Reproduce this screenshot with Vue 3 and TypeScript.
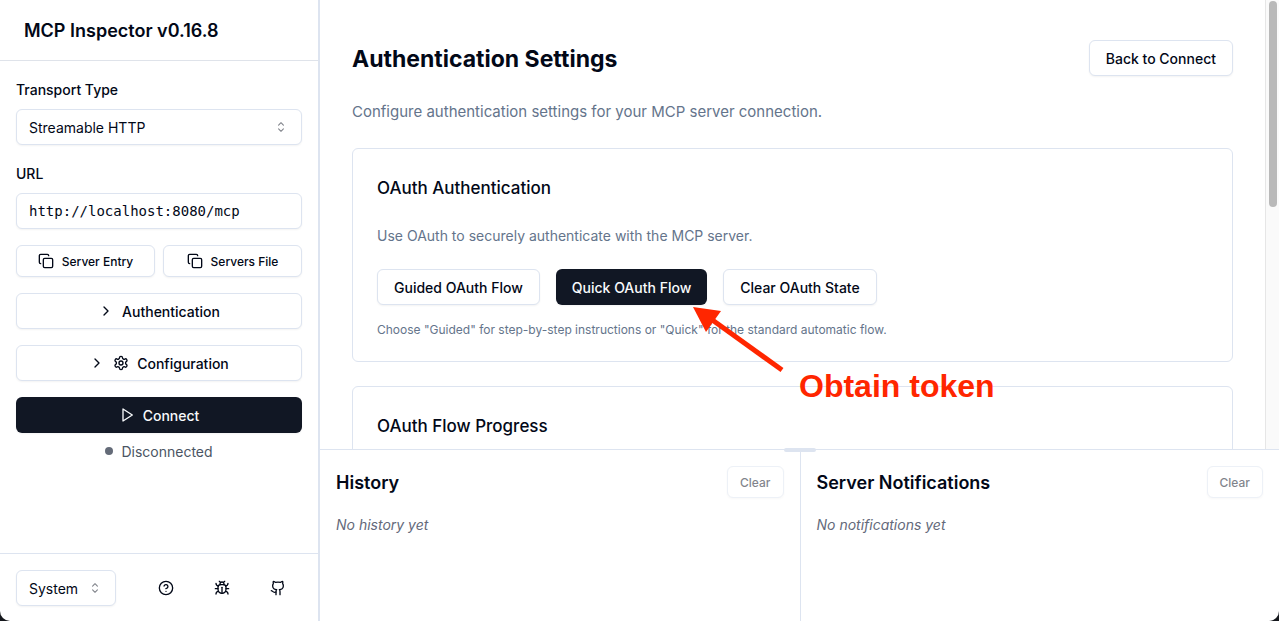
<script setup lang="ts">
import { ref } from 'vue'

const transport = ref<string>('Streamable HTTP')
const url = ref<string>('http://localhost:8080/mcp')
const theme = ref<string>('System')

interface FooterLink {
  label: string
  paths: string[]
}

const footerLinks: FooterLink[] = [
  {
    label: 'Documentation',
    paths: [
      'M2 12a10 10 0 1 0 20 0a10 10 0 1 0-20 0',
      'M9.09 9a3 3 0 0 1 5.83 1c0 2-3 3-3 3',
      'M12 17h.01',
    ],
  },
  {
    label: 'Debugging guide',
    paths: [
      'm8 2 1.88 1.88',
      'M14.12 3.88 16 2',
      'M9 7.13v-1a3.003 3.003 0 1 1 6 0v1',
      'M12 20c-3.3 0-6-2.7-6-6v-3a4 4 0 0 1 4-4h4a4 4 0 0 1 4 4v3c0 3.3-2.7 6-6 6',
      'M12 20v-9',
      'M6.53 9C4.6 8.8 3 7.1 3 5',
      'M6 13H2',
      'M3 21c0-2.1 1.7-3.9 3.8-4',
      'M20.97 5c0 2.1-1.6 3.8-3.5 4',
      'M22 13h-4',
      'M17.2 17c2.1.1 3.8 1.9 3.8 4',
    ],
  },
  {
    label: 'GitHub repository',
    paths: [
      'M15 22v-4a4.8 4.8 0 0 0-1-3.5c3 0 6-2 6-5.5.08-1.25-.27-2.48-1-3.5.28-1.15.28-2.35 0-3.5 0 0-1 0-3 1.5-2.64-.5-5.36-.5-8 0C6 2 5 2 5 2c-.3 1.15-.3 2.35 0 3.5A5.403 5.403 0 0 0 4 9c0 3.5 3 5.5 6 5.5-.39.49-.68 1.05-.85 1.65-.17.6-.22 1.23-.15 1.85v4',
      'M9 18c-4.51 2-5-2-7-2',
    ],
  },
]
</script>

<template>
  <div class="app">
    <aside class="sidebar">
      <header class="sidebar-head">
        <h1>MCP Inspector v0.16.8</h1>
      </header>

      <div class="sidebar-body">
        <div class="field">
          <label for="transport">Transport Type</label>
          <div class="select-wrap">
            <select id="transport" v-model="transport">
              <option>STDIO</option>
              <option>SSE</option>
              <option>Streamable HTTP</option>
            </select>
            <svg class="caret" viewBox="0 0 15 15" aria-hidden="true">
              <path d="M5.25 5.75 7.5 3.5l2.25 2.25M5.25 9.25 7.5 11.5l2.25-2.25" />
            </svg>
          </div>
        </div>

        <div class="field">
          <label for="url">URL</label>
          <input id="url" v-model="url" class="mono" type="text" />
        </div>

        <div class="pair">
          <button type="button" class="btn small">
            <svg class="icon" viewBox="0 0 24 24" aria-hidden="true">
              <rect x="8" y="8" width="14" height="14" rx="2" />
              <path d="M4 16c-1.1 0-2-.9-2-2V4c0-1.1.9-2 2-2h10c1.1 0 2 .9 2 2" />
            </svg>
            Server Entry
          </button>
          <button type="button" class="btn small">
            <svg class="icon" viewBox="0 0 24 24" aria-hidden="true">
              <rect x="8" y="8" width="14" height="14" rx="2" />
              <path d="M4 16c-1.1 0-2-.9-2-2V4c0-1.1.9-2 2-2h10c1.1 0 2 .9 2 2" />
            </svg>
            Servers File
          </button>
        </div>

        <button type="button" class="btn">
          <svg class="icon" viewBox="0 0 24 24" aria-hidden="true"><path d="m9 18 6-6-6-6" /></svg>
          Authentication
        </button>

        <button type="button" class="btn">
          <svg class="icon" viewBox="0 0 24 24" aria-hidden="true"><path d="m9 18 6-6-6-6" /></svg>
          <svg class="icon" viewBox="0 0 24 24" aria-hidden="true">
            <path d="M12.22 2h-.44a2 2 0 0 0-2 2v.18a2 2 0 0 1-1 1.73l-.43.25a2 2 0 0 1-2 0l-.15-.08a2 2 0 0 0-2.73.73l-.22.38a2 2 0 0 0 .73 2.73l.15.1a2 2 0 0 1 1 1.72v.51a2 2 0 0 1-1 1.74l-.15.09a2 2 0 0 0-.73 2.73l.22.38a2 2 0 0 0 2.73.73l.15-.08a2 2 0 0 1 2 0l.43.25a2 2 0 0 1 1 1.73V20a2 2 0 0 0 2 2h.44a2 2 0 0 0 2-2v-.18a2 2 0 0 1 1-1.73l.43-.25a2 2 0 0 1 2 0l.15.08a2 2 0 0 0 2.73-.73l.22-.39a2 2 0 0 0-.73-2.73l-.15-.08a2 2 0 0 1-1-1.74v-.5a2 2 0 0 1 1-1.74l.15-.09a2 2 0 0 0 .73-2.73l-.22-.38a2 2 0 0 0-2.73-.73l-.15.08a2 2 0 0 1-2 0l-.43-.25a2 2 0 0 1-1-1.73V4a2 2 0 0 0-2-2z" />
            <circle cx="12" cy="12" r="3" />
          </svg>
          Configuration
        </button>

        <div class="connect">
          <button type="button" class="btn primary">
            <svg class="icon" viewBox="0 0 24 24" aria-hidden="true"><path d="M6 3l14 9-14 9z" /></svg>
            Connect
          </button>
          <p class="status"><span class="dot"></span>Disconnected</p>
        </div>
      </div>

      <footer class="sidebar-foot">
        <div class="select-wrap theme">
          <select v-model="theme" aria-label="Theme">
            <option>System</option>
            <option>Light</option>
            <option>Dark</option>
          </select>
          <svg class="caret" viewBox="0 0 15 15" aria-hidden="true">
            <path d="M5.25 5.75 7.5 3.5l2.25 2.25M5.25 9.25 7.5 11.5l2.25-2.25" />
          </svg>
        </div>
        <nav class="links">
          <a v-for="link in footerLinks" :key="link.label" href="#" :aria-label="link.label">
            <svg class="icon" viewBox="0 0 24 24" aria-hidden="true">
              <path v-for="d in link.paths" :key="d" :d="d" />
            </svg>
          </a>
        </nav>
      </footer>
    </aside>

    <div class="workspace">
      <div class="upper">
        <main class="content">
          <div class="title-row">
            <h2>Authentication Settings</h2>
            <button type="button" class="btn">Back to Connect</button>
          </div>
          <p class="lead">Configure authentication settings for your MCP server connection.</p>

          <section class="card">
            <h3>OAuth Authentication</h3>
            <p class="desc">Use OAuth to securely authenticate with the MCP server.</p>
            <div class="actions">
              <button type="button" class="btn">Guided OAuth Flow</button>
              <button type="button" class="btn primary">Quick OAuth Flow</button>
              <button type="button" class="btn">Clear OAuth State</button>
            </div>
            <p class="note">Choose "Guided" for step-by-step instructions or "Quick" for the standard automatic flow.</p>
          </section>

          <section class="card">
            <h3>OAuth Flow Progress</h3>
          </section>

          <div class="callout">
            <svg viewBox="0 0 92 66" aria-hidden="true">
              <path class="shaft" d="M18 12 89 63" />
              <path class="head" d="M0 0 28 4 13 25z" />
            </svg>
            <span>Obtain token</span>
          </div>
        </main>
        <div class="scrollbar" aria-hidden="true"><div class="thumb"></div></div>
      </div>

      <div class="lower">
        <span class="grip"></span>
        <section class="panel">
          <div class="panel-head">
            <h2>History</h2>
            <button type="button" class="btn small" disabled>Clear</button>
          </div>
          <p class="empty">No history yet</p>
        </section>
        <section class="panel">
          <div class="panel-head">
            <h2>Server Notifications</h2>
            <button type="button" class="btn small" disabled>Clear</button>
          </div>
          <p class="empty">No notifications yet</p>
        </section>
      </div>
    </div>
  </div>
</template>

<style>
body {
  background: #14171c;
}
</style>

<style scoped>
* {
  box-sizing: border-box;
}

.app {
  display: flex;
  height: 100vh;
  overflow: hidden;
  border-radius: 0 0 10px 10px;
  background: #fff;
  color: #020817;
  font-family: Inter, 'Liberation Sans', sans-serif;
  font-size: 14px;
  line-height: 20px;
}

h1,
h2,
h3,
p {
  margin: 0;
}

.sidebar {
  display: flex;
  flex-direction: column;
  flex: 0 0 320px;
  border-right: 2px solid #dde4f0;
}

.sidebar-head {
  padding: 17px 24px 15px;
  border-bottom: 1px solid #dfe3ea;
}

h1 {
  font-size: 18px;
  line-height: 28px;
  font-weight: 600;
}

.sidebar-body {
  display: flex;
  flex: 1;
  flex-direction: column;
  gap: 16px;
  padding: 16px;
}

.field {
  display: flex;
  flex-direction: column;
  gap: 8px;
}

label {
  padding-top: 2px;
  font-weight: 500;
  line-height: 22px;
}

select,
input {
  width: 100%;
  height: 36px;
  margin: 0;
  padding: 0 12px;
  border: 1px solid #dde4f0;
  border-radius: 6px;
  background: #fff;
  box-shadow: 0 1px 2px rgba(0, 0, 0, 0.05);
  color: inherit;
  font: inherit;
  appearance: none;
}

select {
  padding-top: 2px;
}

.mono {
  font-family: 'DejaVu Sans Mono', monospace;
}

.select-wrap {
  position: relative;
}

.caret {
  position: absolute;
  top: 10px;
  right: 13px;
  width: 16px;
  height: 16px;
  opacity: 0.5;
  pointer-events: none;
  fill: none;
  stroke: currentColor;
  stroke-linecap: round;
  stroke-linejoin: round;
}

.pair {
  display: grid;
  grid-template-columns: 1fr 1fr;
  gap: 8px;
}

.btn {
  display: flex;
  align-items: center;
  justify-content: center;
  gap: 8px;
  height: 36px;
  margin: 0;
  padding: 2px 16px 0;
  border: 1px solid #dde4f0;
  border-radius: 6px;
  background: #fff;
  box-shadow: 0 1px 2px rgba(0, 0, 0, 0.05);
  color: #020817;
  font: inherit;
  font-weight: 500;
  white-space: nowrap;
}

.btn.small {
  height: 32px;
  padding: 2px 12px 0;
  font-size: 12px;
}

.btn.primary {
  border: 0;
  background: #111724;
  color: #f8fafc;
}

.btn:disabled {
  opacity: 0.5;
}

.icon {
  flex: none;
  width: 16px;
  height: 16px;
  fill: none;
  stroke: currentColor;
  stroke-width: 2;
  stroke-linecap: round;
  stroke-linejoin: round;
}

.btn .icon,
.dot {
  margin-bottom: 2px;
}

.connect {
  display: flex;
  flex-direction: column;
  gap: 8px;
}

.status {
  display: flex;
  align-items: center;
  justify-content: center;
  gap: 8px;
  padding-top: 1px;
  color: #4b5563;
}

.dot {
  width: 8px;
  height: 8px;
  border-radius: 50%;
  background: #646b78;
}

.sidebar-foot {
  display: flex;
  align-items: center;
  justify-content: space-between;
  padding: 16px 16px 15px;
  border-top: 1px solid #dde4f0;
}

.theme {
  width: 100px;
}

.links {
  display: flex;
  gap: 8px;
}

.links a {
  display: flex;
  align-items: center;
  justify-content: center;
  width: 48px;
  height: 36px;
  color: inherit;
}

.workspace {
  display: flex;
  flex: 1;
  flex-direction: column;
  min-width: 0;
}

.upper {
  display: flex;
  flex: 1;
  min-height: 0;
}

.content {
  position: relative;
  display: flex;
  flex: 1;
  flex-direction: column;
  gap: 24px;
  min-width: 0;
  padding: 40px 32px;
  overflow: auto;
  scrollbar-width: none;
}

.content > * {
  flex: none;
}

.title-row,
.panel-head {
  display: flex;
  align-items: center;
  justify-content: space-between;
}

.title-row h2,
.panel-head h2 {
  padding-top: 2px;
}

.title-row h2 {
  font-size: 23px;
  line-height: 32px;
  font-weight: 700;
}

.lead {
  color: #64748b;
  font-size: 15px;
  line-height: 24px;
}

.card {
  padding: 25px 24px 23px;
  border: 1px solid #dde4f0;
  border-radius: 6px;
}

h3 {
  font-size: 17px;
  line-height: 28px;
  font-weight: 500;
}

.desc {
  margin: 24px 0 23px;
  color: #64748b;
}

.actions {
  display: flex;
  gap: 16px;
}

.note {
  margin-top: 17px;
  color: #64748b;
  font-size: 12px;
  line-height: 16px;
}

.callout {
  position: absolute;
  top: 307px;
  left: 373px;
  display: flex;
  gap: 14px;
  color: #ff2600;
  pointer-events: none;
}

.callout svg {
  width: 92px;
  height: 66px;
}

.callout span {
  padding-top: 61px;
  font: 700 32px/36px 'Liberation Sans', Arial, sans-serif;
}

.head {
  fill: currentColor;
}

.shaft {
  fill: none;
  stroke: currentColor;
  stroke-width: 5;
}

.scrollbar {
  flex: 0 0 14px;
  padding: 1px 2px 1px 3px;
  border-left: 1px solid #e6e6e6;
  background: #fafafa;
}

.thumb {
  height: 46%;
  border-radius: 4px;
  background: #b9b9b9;
}

.lower {
  position: relative;
  display: grid;
  grid-template-columns: 1fr 1fr;
  flex: 0 0 172px;
  border-top: 1px solid #dde4f0;
}

.grip {
  position: absolute;
  top: -2px;
  left: calc(50% - 16px);
  width: 32px;
  height: 4px;
  border-radius: 2px;
  background: #dde4f0;
}

.panel {
  padding: 16px;
}

.panel + .panel {
  border-left: 1px solid #dde4f0;
}

.panel-head {
  margin-bottom: 17px;
}

.panel-head h2 {
  font-size: 18px;
  line-height: 28px;
  font-weight: 600;
}

.empty {
  color: #64697a;
  font-style: italic;
}
</style>
